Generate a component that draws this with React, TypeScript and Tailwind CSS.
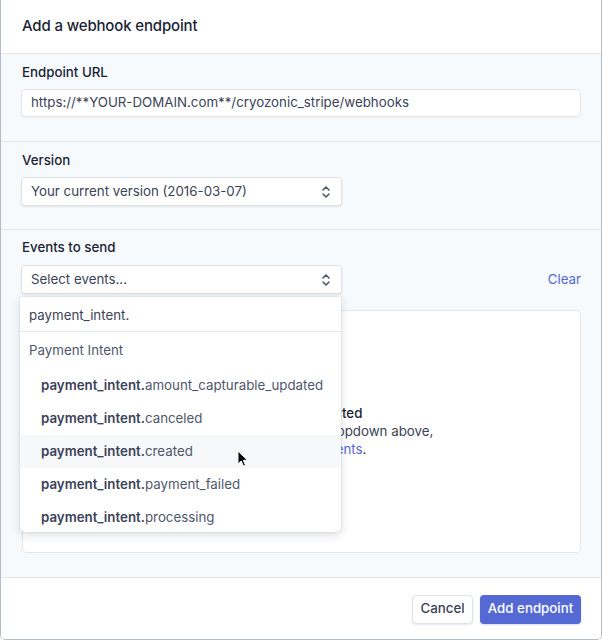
import React from 'react';

const font = { fontFamily: 'Inter, "Noto Sans", sans-serif' };

const Chevrons: React.FC = () => (
  <svg width="10" height="14" viewBox="0 0 10 14" fill="none" stroke="#4f566b" strokeWidth={1.6} strokeLinecap="round" strokeLinejoin="round">
    <path d="M2 5l3-3 3 3" />
    <path d="M2 9l3 3 3-3" />
  </svg>
);

const Cursor: React.FC = () => (
  <svg width="12" height="18" viewBox="0 0 12 18" className="absolute left-[237px] top-[450px]">
    <path d="M1 1v13l3.2-3 2.3 5.2 2-.9-2.2-5H10.5z" fill="#000" stroke="#fff" strokeWidth={1} strokeLinejoin="round" />
  </svg>
);

const events = ['amount_capturable_updated', 'canceled', 'created', 'payment_failed', 'processing'];

export default function App() {
  return (
    <div style={font} className="relative w-[602px] h-[640px] overflow-hidden bg-white text-[#3c4257] text-[13.3px]">
      <div className="flex flex-col h-[640px] border-x border-b border-[#b4bcc8] rounded-b-[5px] overflow-hidden">
        <div className="h-[54px] flex items-center px-[21px] border-b border-[#e3e8ee] bg-white">
          <h1 className="text-[15px] font-medium text-[#1a1f36] tracking-[-0.15px]">Add a webhook endpoint</h1>
        </div>

        <div className="flex-1 bg-[#f7fafc] flex flex-col">
          <div className="px-[20px] pt-[8px] pb-[24px] border-b border-[#e3e8ee]">
            <div className="h-[20px] leading-[20px] font-medium text-[#1a1f36] px-[1px]">Endpoint URL</div>
            <div className="mt-[7px] h-[28px] bg-white rounded-[4px] border border-[#e3e8ee] shadow-[0_1px_1px_rgba(0,0,0,0.04)] flex items-center px-[9px]">
              https://**YOUR-DOMAIN.com**/cryozonic_stripe/webhooks
            </div>
          </div>

          <div className="px-[20px] pt-[8px] pb-[23px] border-b border-[#e3e8ee]">
            <div className="h-[20px] leading-[20px] font-medium text-[#1a1f36] px-[1px]">Version</div>
            <div className="mt-[7px] w-[321px] h-[29px] bg-white rounded-[4px] border border-[#dfe3e8] shadow-[0_1px_2px_rgba(60,66,87,0.12)] flex items-center justify-between pl-[9px] pr-[10px]">
              <span>Your current version (2016-03-07)</span>
              <Chevrons />
            </div>
          </div>

          <div className="flex-1 px-[20px] pt-[7px] pb-[24px] border-b border-[#e3e8ee] flex flex-col">
            <div className="h-[20px] leading-[20px] font-medium text-[#1a1f36] px-[1px]">Events to send</div>
            <div className="mt-[8px] flex items-center justify-between">
              <div className="w-[321px] h-[29px] bg-white rounded-[4px] border border-[#dfe3e8] shadow-[0_1px_2px_rgba(60,66,87,0.12)] flex items-center justify-between pl-[9px] pr-[10px]">
                <span>Select events...</span>
                <Chevrons />
              </div>
              <span className="text-[#5469d4]">Clear</span>
            </div>
            <div className="flex-1 mt-[16px] ml-[1px] bg-white border border-[#e3e8ee] rounded-[4px] flex flex-col items-center justify-end pb-[94px] leading-[18px] text-center">
              <div className="font-medium text-[#1a1f36]">No events selected</div>
              <div>Choose events from the dropdown above,</div>
              <div>
                or browse <span className="text-[#5469d4]">all events</span>.
              </div>
            </div>
          </div>
        </div>

        <div className="h-[61px] bg-white flex items-center justify-end gap-[7px] px-[20px] pt-[1px]">
          <button className="w-[61px] h-[29px] rounded-[4px] bg-white border border-[#dfe3e8] shadow-[0_1px_2px_rgba(60,66,87,0.12)] font-medium text-[#3c4257]">
            Cancel
          </button>
          <button className="w-[101px] h-[29px] rounded-[4px] bg-[#5469d4] shadow-[0_1px_2px_rgba(60,66,87,0.2)] font-medium text-white">
            Add endpoint
          </button>
        </div>
      </div>

      <div className="absolute left-[20px] top-[297px] w-[321px] h-[235px] overflow-hidden bg-white rounded-b-[5px] shadow-[0_3px_10px_rgba(60,66,87,0.18),0_0_0_1px_rgba(60,66,87,0.06)]">
        <div className="h-[35px] flex items-center px-[9px] pt-[4px] border-b border-[#e3e8ee]">payment_intent.</div>
        <div className="h-[37px] flex items-center px-[9px] pt-[1px] text-[#4f566b]">Payment Intent</div>
        {events.map((e) => (
          <div key={e} className={`h-[33px] flex items-center pl-[21px] pt-[1px] ${e === 'created' ? 'bg-[#f6f8fa]' : ''}`}>
            <span className="font-semibold text-[#3c4257]">payment_intent.</span>
            <span className="text-[#4f566b]">{e}</span>
          </div>
        ))}
      </div>

      <Cursor />
    </div>
  );
}
